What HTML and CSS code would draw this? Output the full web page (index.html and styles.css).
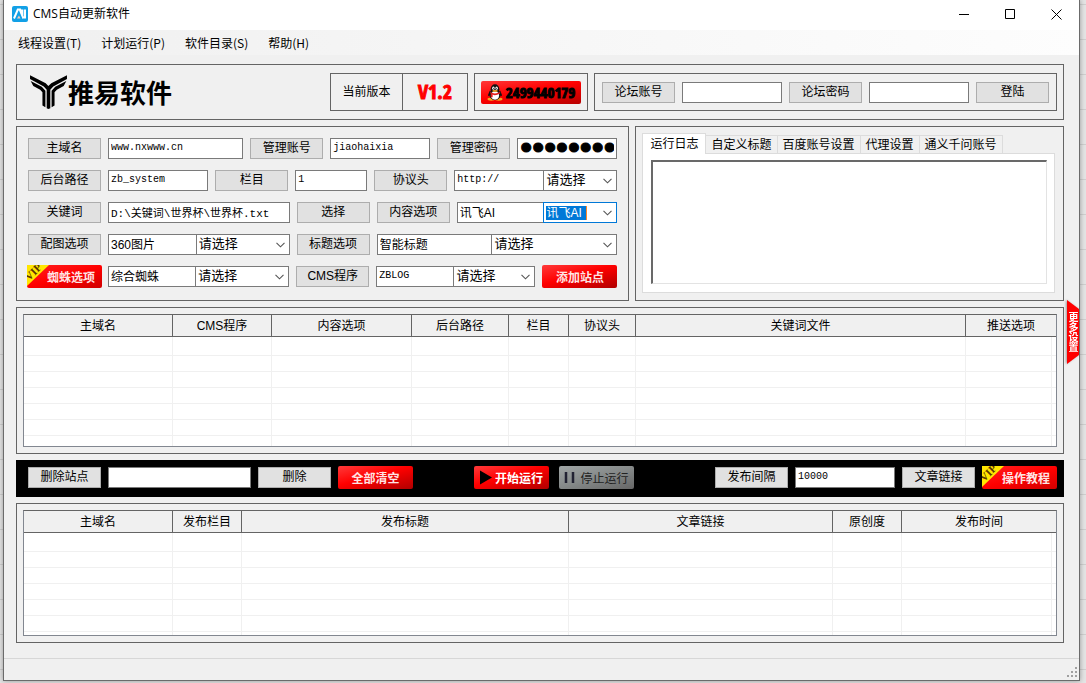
FILE: index.html
```html
<!DOCTYPE html>
<html lang="zh-CN">
<head>
<meta charset="utf-8">
<title>CMS自动更新软件</title>
<link rel="stylesheet" href="styles.css">
</head>
<body>
<svg class="defs" aria-hidden="true">
  <symbol id="chevron" viewBox="0 0 9 6"><path d="M0.5 0.8 4.5 4.8 8.5 0.8" fill="none" stroke="#555" stroke-width="1.1"/></symbol>
  <symbol id="ribbon" viewBox="0 0 23 23"><path d="M0 0H22L0 21Z" fill="#ffe600"/><text x="-10" y="13" transform="rotate(-45)" font-family="Liberation Serif, serif" font-size="11" fill="#5a3200">VIP</text></symbol>
</svg>
<main class="window">
  <header class="titlebar">
    <svg class="app-icon" viewBox="0 0 16 16"><rect width="16" height="16" rx="2" fill="#12a0e6"/><path d="M2 12.5 5.8 3.5H8.2L10.4 9V3.5M13 3.5V12.5" fill="none" stroke="#fff" stroke-width="2"/><path d="M8 4 11.5 12.5" stroke="#fff" stroke-width="2"/><path d="M5 12.5 7 9.5 8.5 12.5Z" fill="#f7c9b4"/></svg>
    <h1 class="title">CMS自动更新软件</h1>
    <button class="win-btn" aria-label="最小化"><svg viewBox="0 0 11 11"><path d="M0 5.5H10" stroke="#000"/></svg></button>
    <button class="win-btn" aria-label="最大化"><svg viewBox="0 0 11 11"><path d="M.5 .5H9.5V9.5H.5Z" fill="none" stroke="#000"/></svg></button>
    <button class="win-btn" aria-label="关闭"><svg viewBox="0 0 11 11"><path d="M.5 .5 10.5 10.5M10.5 .5 .5 10.5" stroke="#000"/></svg></button>
  </header>
  <nav class="menu">
    <button>线程设置(T)</button><button>计划运行(P)</button><button>软件目录(S)</button><button>帮助(H)</button>
  </nav>

  <div class="content">
    <section class="panel top">
      <div class="brand">
        <svg class="brand-mark" viewBox="0 0 117 104"><path d="M2 1 50 25 58 34 67 25 115 1V12L73 35 64 45V102L58 104 53 102V45L44 35 2 12Z"/><path d="M4 18 38 36 49 48V99L40 93V53L33 45 12 34Z"/><path d="M113 18 79 36 68 48V99L77 93V53L84 45 105 34Z"/></svg>
        <span>推易软件</span>
      </div>
      <div class="box version"><span class="version-label">当前版本</span><strong class="version-number">V1.2</strong></div>
      <div class="box contact">
        <button class="qq">
          <svg viewBox="0 0 17 18"><ellipse cx="4.5" cy="16" rx="4" ry="1.8" fill="#f5a623"/><ellipse cx="12.500" cy="16" rx="4" ry="1.8" fill="#f5a623"/><path d="M3 7 1 12 2 13 4 11M14 7 16 12 15 13 13 11" fill="#111"/><ellipse cx="8.500" cy="11" rx="6" ry="6" fill="#111"/><ellipse cx="8.500" cy="5.500" rx="4.600" ry="5.300" fill="#111"/><ellipse cx="8.500" cy="12.300" rx="4.300" ry="4.300" fill="#fff"/><ellipse cx="6.800" cy="4.400" rx="1.300" ry="1.700" fill="#fff"/><ellipse cx="10.200" cy="4.400" rx="1.300" ry="1.700" fill="#fff"/><circle cx="7.200" cy="4.600" r=".6"/><circle cx="9.800" cy="4.600" r=".6"/><ellipse cx="8.500" cy="7.300" rx="3" ry="1" fill="#f5a623"/><path d="M3 8.500Q8.500 11.500 14 8.500V10Q8.500 13 6 11.200V14H4V10.500Z" fill="#e21b1b"/></svg>
          <span>2499440179</span>
        </button>
      </div>
      <div class="box login">
        <button class="btn">论坛账号</button><input class="field w100" aria-label="论坛账号">
        <button class="btn">论坛密码</button><input class="field w100" aria-label="论坛密码">
        <button class="btn">登陆</button>
      </div>
    </section>

    <div class="middle">
      <section class="panel form">
        <div class="row">
          <button class="btn">主域名</button><input class="field latin w135" aria-label="主域名" value="www.nxwww.cn">
          <button class="btn">管理账号</button><input class="field latin w100" aria-label="管理账号" value="jiaohaixia">
          <button class="btn">管理密码</button><input class="field secret w100" type="password" aria-label="管理密码" value="12345678">
        </div>
        <div class="row">
          <button class="btn">后台路径</button><input class="field latin w100" aria-label="后台路径" value="zb_system">
          <button class="btn">栏目</button><input class="field latin w72" aria-label="栏目" value="1">
          <button class="btn">协议头</button>
          <div class="pair w163"><input class="field latin" aria-label="协议头" value="http://"><label class="pick p74"><select aria-label="选择协议头"><option>请选择</option></select><svg><use href="#chevron"/></svg></label></div>
        </div>
        <div class="row">
          <button class="btn">关键词</button><input class="field path w181" aria-label="关键词" value="D:\关键词\世界杯\世界杯.txt">
          <button class="btn">选择</button>
          <button class="btn">内容选项</button>
          <div class="pair w160"><input class="field" aria-label="内容选项" value="讯飞AI"><div class="combo p74"><input aria-label="选择内容" value="讯飞AI"><button aria-label="展开"><svg><use href="#chevron"/></svg></button></div></div>
        </div>
        <div class="row">
          <button class="btn">配图选项</button>
          <div class="pair w181"><input class="field" aria-label="配图选项" value="360图片"><label class="pick p94"><select aria-label="选择配图"><option>请选择</option></select><svg><use href="#chevron"/></svg></label></div>
          <button class="btn">标题选项</button>
          <div class="pair w240"><input class="field" aria-label="标题选项" value="智能标题"><label class="pick p126"><select aria-label="选择标题"><option>请选择</option></select><svg><use href="#chevron"/></svg></label></div>
        </div>
        <div class="row">
          <button class="art vip"><svg><use href="#ribbon"/></svg>蜘蛛选项</button>
          <div class="pair w181"><input class="field" aria-label="蜘蛛选项" value="综合蜘蛛"><label class="pick p94"><select aria-label="选择蜘蛛"><option>请选择</option></select><svg><use href="#chevron"/></svg></label></div>
          <button class="btn">CMS程序</button>
          <div class="pair w159"><input class="field latin" aria-label="CMS程序" value="ZBLOG"><label class="pick p82"><select aria-label="选择程序"><option>请选择</option></select><svg><use href="#chevron"/></svg></label></div>
          <button class="art">添加站点</button>
        </div>
      </section>

      <section class="panel log">
        <div class="tabs" role="tablist">
          <button class="tab active" role="tab">运行日志</button><button class="tab" role="tab">自定义标题</button><button class="tab" role="tab">百度账号设置</button><button class="tab" role="tab">代理设置</button><button class="tab" role="tab">通义千问账号</button>
        </div>
        <div class="tab-body"><textarea aria-label="运行日志"></textarea></div>
      </section>
    </div>

    <section class="panel list">
      <table class="grid">
        <colgroup><col class="c149"><col class="c99"><col class="c140"><col class="c97"><col class="c60"><col class="c67"><col class="c330"><col class="c90"></colgroup>
        <thead><tr><th>主域名</th><th>CMS程序</th><th>内容选项</th><th>后台路径</th><th>栏目</th><th>协议头</th><th>关键词文件</th><th>推送选项</th></tr></thead>
        <tbody>
          <tr class="first"><td></td><td></td><td></td><td></td><td></td><td></td><td></td><td></td></tr>
          <tr><td></td><td></td><td></td><td></td><td></td><td></td><td></td><td></td></tr>
          <tr><td></td><td></td><td></td><td></td><td></td><td></td><td></td><td></td></tr>
          <tr><td></td><td></td><td></td><td></td><td></td><td></td><td></td><td></td></tr>
          <tr><td></td><td></td><td></td><td></td><td></td><td></td><td></td><td></td></tr>
          <tr><td></td><td></td><td></td><td></td><td></td><td></td><td></td><td></td></tr>
          <tr class="rest"><td></td><td></td><td></td><td></td><td></td><td></td><td></td><td></td></tr>
        </tbody>
      </table>
    </section>

    <section class="actions">
      <div class="group">
        <button class="btn">删除站点</button><input class="field w143" aria-label="删除站点">
        <button class="btn">删除</button><button class="art">全部清空</button>
      </div>
      <div class="group run">
        <button class="art start"><svg viewBox="0 0 13 15"><path d="M0 0 13 7.500 0 15Z" fill="#000"/></svg>开始运行</button>
        <button class="art stop"><svg viewBox="0 0 11 11"><path d="M2 0V11M9 0V11" stroke="#223" stroke-width="2.500"/></svg>停止运行</button>
      </div>
      <div class="group">
        <button class="btn">发布间隔</button><input class="field latin w100" aria-label="发布间隔" value="10000">
        <button class="btn">文章链接</button><button class="art vip"><svg><use href="#ribbon"/></svg>操作教程</button>
      </div>
    </section>

    <section class="panel list">
      <table class="grid">
        <colgroup><col class="c149"><col class="c69"><col class="c327"><col class="c264"><col class="c69"><col class="c154"></colgroup>
        <thead><tr><th>主域名</th><th>发布栏目</th><th>发布标题</th><th>文章链接</th><th>原创度</th><th>发布时间</th></tr></thead>
        <tbody>
          <tr class="first"><td></td><td></td><td></td><td></td><td></td><td></td></tr>
          <tr><td></td><td></td><td></td><td></td><td></td><td></td></tr>
          <tr><td></td><td></td><td></td><td></td><td></td><td></td></tr>
          <tr><td></td><td></td><td></td><td></td><td></td><td></td></tr>
          <tr><td></td><td></td><td></td><td></td><td></td><td></td></tr>
          <tr><td></td><td></td><td></td><td></td><td></td><td></td></tr>
          <tr class="rest short"><td></td><td></td><td></td><td></td><td></td><td></td></tr>
        </tbody>
      </table>
    </section>
  </div>

  <footer class="status"><svg viewBox="0 0 12 12"><path d="M8 0H10V2H8ZM4 4H6V6H4ZM8 4H10V6H8ZM0 8H2V10H0ZM4 8H6V10H4ZM8 8H10V10H8Z" fill="#a0a0a0"/></svg></footer>
  <div class="more-wrap"><button class="more">更多设置</button></div>
</main>
</body>
</html>
```
FILE: styles.css
```css
* { box-sizing: border-box; }
body {
  margin: 0;
  padding: 0 6px 2px 3px;
  min-height: 100vh;
  background: repeating-linear-gradient(#e4e4e4 0 4px, #cfcfcf 4px 5px, #e4e4e4 5px 35px);
  font: 12px/16px "Liberation Sans", "Noto Sans CJK SC", sans-serif;
  color: #000;
}
button, input, select, textarea { font: inherit; color: inherit; margin: 0; }
button { padding: 0; border: 0; background: none; white-space: nowrap; }
.defs { display: none; }

.window {
  position: relative;
  border: 1px solid #6b6b6b;
  border-top: 0;
  background: #f0f0f0;
  box-shadow: 0 0 5px rgba(0, 0, 0, .35);
}
.titlebar { display: flex; align-items: center; height: 30px; padding: 0 0 2px 8px; background: #fff; }
.app-icon { width: 16px; height: 16px; }
.title { flex: 1; margin: 0 0 0 5px; font: 12px/16px "Open Sans", "Noto Sans CJK SC", sans-serif; }
.win-btn { display: grid; place-items: center; width: 46px; height: 28px; }
.win-btn svg { width: 11px; height: 11px; }

.menu {
  display: flex;
  gap: 20px;
  height: 25px;
  padding-left: 14px;
  background: linear-gradient(90deg, #f0f0f0, #fdfdfd);
  font-family: "Noto Sans CJK SC", sans-serif;
}

.content { display: flex; flex-direction: column; gap: 6px; padding: 9px 15px 15px 12px; }
.panel, .box { border: 1px solid #646464; }

.top { display: flex; gap: 6px; padding: 8px 6px; }
.brand { flex: 1; display: flex; align-items: center; padding-left: 6px; font: bold 26px/38px "Noto Sans CJK SC", sans-serif; }
.brand-mark { width: 39px; height: 34px; }
.box { display: flex; align-items: center; height: 38px; }
.version { width: 138px; }
.version-label { width: 72px; line-height: 36px; text-align: center; border-right: 1px solid #646464; }
.version-number { flex: 1; text-align: center; color: #f00; font: bold 20px/36px "Liberation Sans Narrow", "Open Sans Condensed", "DejaVu Sans Condensed", sans-serif; -webkit-text-stroke: 1px #f00; }
.contact { width: 114px; justify-content: center; }
.qq {
  display: flex;
  align-items: center;
  justify-content: center;
  gap: 3px;
  width: 100px;
  height: 23px;
  border-radius: 2px;
  background: linear-gradient(170deg, #ff3838, #f00 45%, #b80000);
  font: bold 15px/23px "Liberation Sans Narrow", "Open Sans Condensed", "DejaVu Sans Condensed", sans-serif;
  -webkit-text-stroke: 1px #000;
}
.qq svg { width: 16px; height: 17px; }
.login { gap: 7px; padding: 0 7px; width: 463px; }

.btn { flex: none; width: 73px; height: 21px; border: 1px solid #adadad; background: #e1e1e1; line-height: 19px; }
.field { min-width: 0; width: 100%; height: 21px; padding: 0 2px 2px; border: 1px solid #7a7a7a; border-radius: 0; background: #fff; outline: 0; }
.latin { padding-bottom: 2px; font: 10px/16px "Liberation Mono", monospace; }
.path { font: 11px/16px "Liberation Mono", "Noto Sans CJK SC", monospace; }
.secret { font: 34px/19px "Liberation Sans", sans-serif; -webkit-text-stroke: 1px #000; }
.w72 { flex: 72 1 72px; }
.w100 { flex: 100 1 100px; }
.w135 { flex: 135 1 135px; }
.w143 { flex: none; width: 143px; }
.w159 { flex: 159 1 159px; }
.w160 { flex: 160 1 160px; }
.w163 { flex: 163 1 163px; }
.w181 { flex: 181 1 181px; }
.w240 { flex: 240 1 240px; }

.middle { display: flex; gap: 6px; }
.form { flex: 613 1 0; min-width: 0; display: flex; flex-direction: column; gap: 11px; padding: 11px 11px 13px; }
.row { display: flex; align-items: center; gap: 7px; height: 21px; }
.pair { display: flex; min-width: 0; }
.pick, .combo { flex: none; height: 21px; margin-left: -1px; border: 1px solid #7a7a7a; background: #fff; }
.p74 { width: 74px; }
.p82 { width: 82px; }
.p94 { width: 94px; }
.p126 { width: 126px; }
.pick { display: grid; align-items: center; font-size: 13px; }
.pick select { grid-area: 1 / 1; width: 100%; height: 19px; padding: 0 2px 2px; border: 0; background: none; appearance: none; outline: 0; }
.pick svg, .combo svg { width: 9px; height: 6px; }
.pick svg { grid-area: 1 / 1; justify-self: end; margin-right: 4px; pointer-events: none; }
.combo { display: flex; align-items: center; justify-content: space-between; padding: 0 4px 0 2px; border-color: #0078d7; }
.combo input { width: 41px; height: 14px; padding: 0; border: 0; border-right: 1px solid #ff8728; background: #0078d7; color: #fff; font-size: 12px; line-height: 14px; outline: 0; }
.combo button { display: flex; }

.art {
  display: flex;
  flex: none;
  align-items: center;
  justify-content: center;
  width: 75px;
  height: 23px;
  border-radius: 2px;
  background: linear-gradient(165deg, #ff3a3a, #f00 45%, #b00000);
  color: #ffe4e4;
  font: bold 12px/23px "Noto Sans CJK SC", sans-serif;
}
.vip { justify-content: flex-start; background: linear-gradient(165deg, #f22, #f00 50%, #d00000); }
.vip svg { flex: none; width: 23px; height: 23px; margin-right: -3px; }
.form .vip { margin: 0 -1px; }

.log { flex: 429 1 0; min-width: 0; display: flex; flex-direction: column; padding: 6px 8px 7px 6px; }
.tabs { display: flex; align-items: flex-end; height: 20px; }
.tab { height: 18px; padding: 0 5px; margin-left: -1px; border: 1px solid #dcdcdc; border-bottom: 0; line-height: 18px; }
.tab.active { position: relative; height: 21px; margin: 0 0 -1px; padding: 0 7px; background: #fff; }
.tab-body { flex: 1; display: flex; padding: 6px 7px 8px 8px; border: 1px solid #dcdcdc; background: #fff; }
.tab-body textarea { flex: 1; min-width: 0; height: 124px; border: 1px solid #e3e3e3; border-top: 2px solid #696969; border-left: 2px solid #696969; background: #fff; resize: none; outline: 0; }

.list { padding: 6px; }
.grid { width: 100%; table-layout: fixed; border: 1px solid #828790; border-top-color: #646464; border-collapse: separate; border-spacing: 0; background: #fff; }
.grid th { height: 22px; padding: 0; border-right: 1px solid #646464; border-bottom: 1px solid #646464; background: #f0f0f0; font-weight: normal; }
.grid th:last-child { border-right: 0; }
.grid td { height: 16px; padding: 0; border-right: 1px solid #f0f0f0; border-bottom: 1px solid #f0f0f0; }
.grid td:last-child { border-right: 0; background: linear-gradient(#f0f0f0, #f0f0f0) right 4px top / 1px 100% no-repeat; }
.grid .first td { height: 19px; }
.grid .rest td { height: 10px; border-bottom: 0; }
.grid .short td { height: 3px; }
.c60 { width: 60px; }
.c67 { width: 67px; }
.c69 { width: 69px; }
.c90 { width: 90px; }
.c97 { width: 97px; }
.c99 { width: 99px; }
.c140 { width: 140px; }
.c149 { width: 149px; }
.c154 { width: 154px; }
.c264 { width: 264px; }
.c327 { width: 327px; }
.c330 { width: 330px; }

.actions { display: flex; align-items: center; justify-content: space-between; height: 37px; padding: 0 7px 2px 12px; background: #000; }
.group { display: flex; align-items: center; gap: 7px; }
.group .w100 { flex: none; width: 100px; }
.run { gap: 10px; margin-right: 20px; }
.start, .stop { gap: 3px; color: #fff; }
.start svg { width: 12px; height: 15px; }
.stop { gap: 5px; background: linear-gradient(165deg, #a0a5a5, #858989 50%, #666); color: #222; font-weight: normal; }
.stop svg { width: 11px; height: 11px; }

.status { display: flex; justify-content: flex-end; align-items: flex-end; height: 22px; padding: 0 0 1px; border-top: 1px solid #d7d7d7; }
.status svg { width: 12px; height: 12px; }
.more-wrap { position: absolute; top: 300px; right: 0; filter: drop-shadow(-1px 0 1px #999); }
.more {
  display: grid;
  place-items: center;
  width: 12px;
  height: 64px;
  background: #f00;
  clip-path: polygon(0 0, 100% 14%, 100% 86%, 0 100%);
  color: #fff;
  font: bold 10px/10px "Noto Sans CJK SC", sans-serif;
  writing-mode: vertical-rl;
}
```
